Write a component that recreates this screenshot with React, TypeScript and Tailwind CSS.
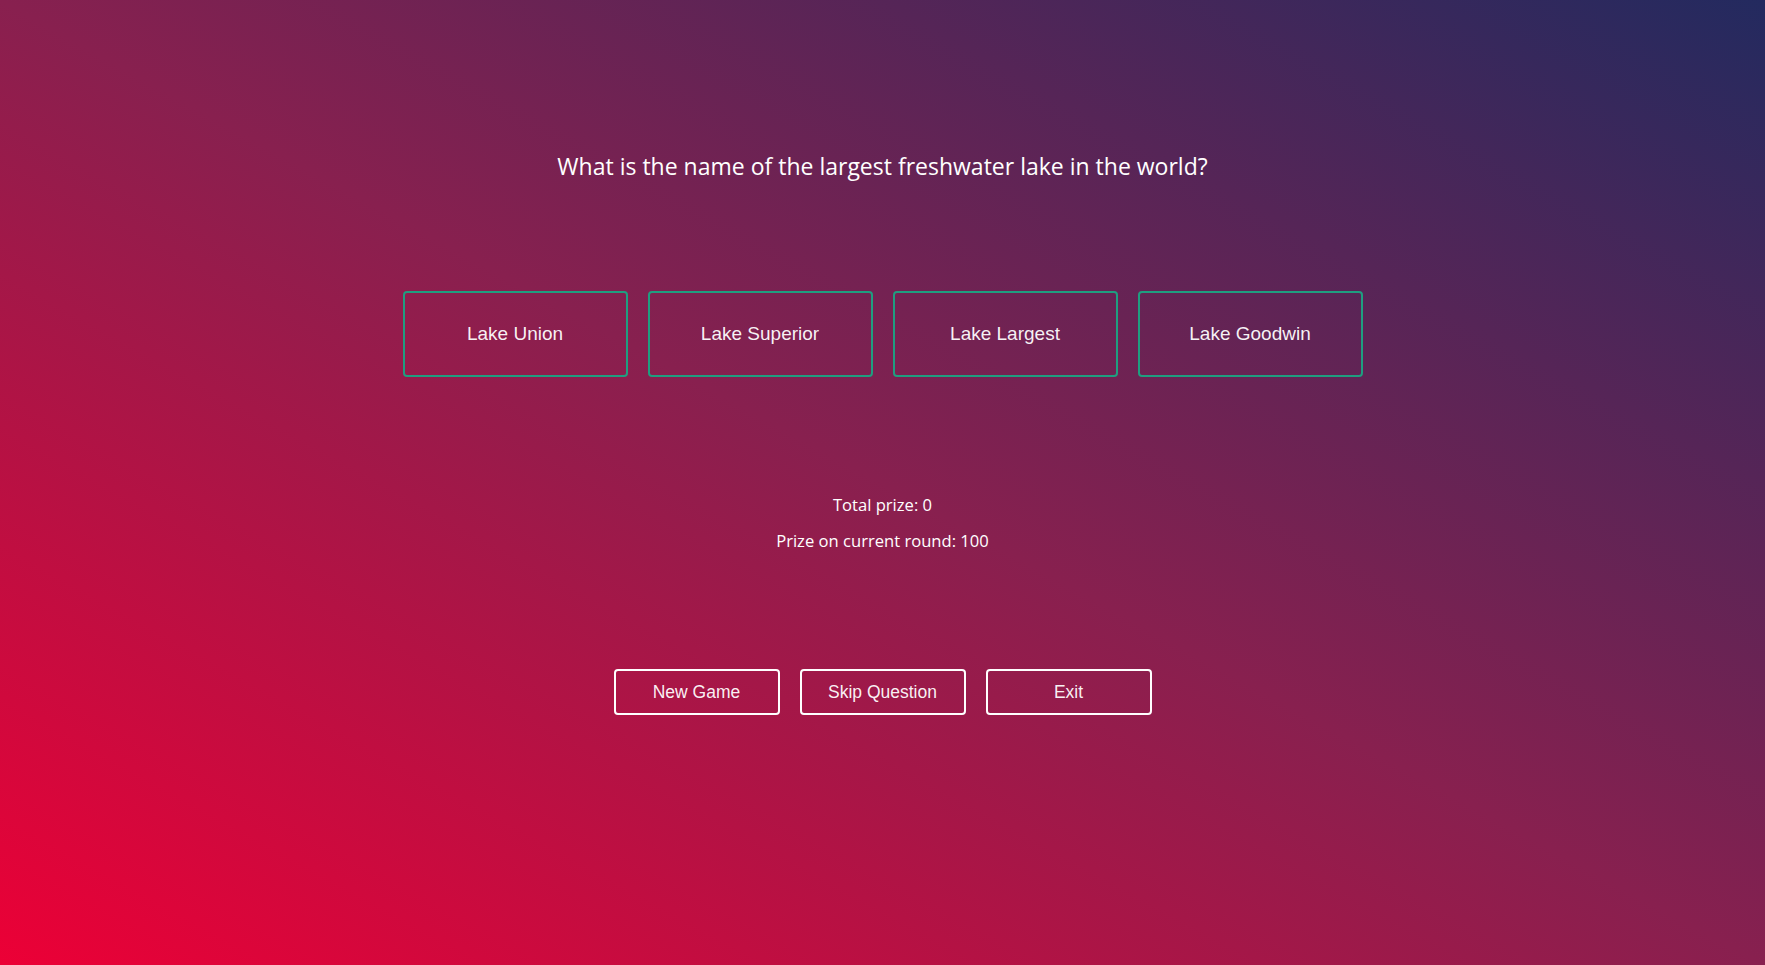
import React from 'react';

const answers = ['Lake Union', 'Lake Superior', 'Lake Largest', 'Lake Goodwin'];
const controls = ['New Game', 'Skip Question', 'Exit'];

export default function App() {
  return (
    <div className="min-h-screen w-full bg-[linear-gradient(to_top_right,#ec0036,#88204f_50%,#232a5f)] flex flex-col items-center pt-[148px] text-white">
      <h1 className="font-['Open_Sans',sans-serif] text-[23px] leading-[36px] font-normal">
        What is the name of the largest freshwater lake in the world?
      </h1>

      <div className="mt-[107px] flex gap-5">
        {answers.map((answer) => (
          <button
            key={answer}
            className="w-[225px] h-[86px] rounded-[4px] border-2 border-[#1f9e80] font-['Liberation_Sans',sans-serif] text-[19px] text-white/95"
          >
            {answer}
          </button>
        ))}
      </div>

      <div className="mt-[110px] flex flex-col items-center font-['Open_Sans',sans-serif] text-[16.6px] leading-[36px]">
        <p>Total prize: 0</p>
        <p>Prize on current round: 100</p>
      </div>

      <div className="mt-[110px] flex gap-5">
        {controls.map((label) => (
          <button
            key={label}
            className="w-[166px] h-[46px] rounded-[4px] border-2 border-white font-['Liberation_Sans',sans-serif] text-[17.5px] text-white/95"
          >
            {label}
          </button>
        ))}
      </div>
    </div>
  );
}
